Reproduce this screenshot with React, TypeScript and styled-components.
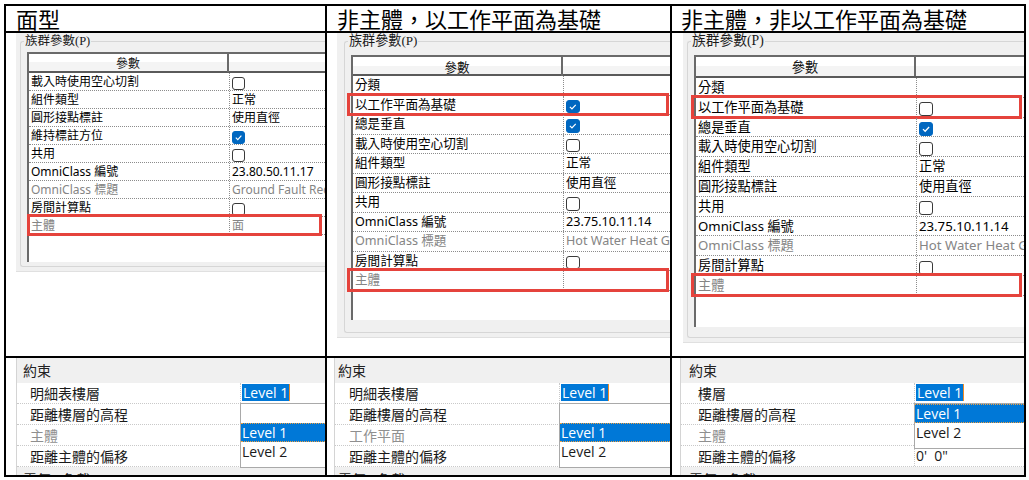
import styled, { createGlobalStyle } from "styled-components";

const GlobalStyle = createGlobalStyle`
  *, *::before, *::after { box-sizing: border-box; }
  html, body { margin: 0; padding: 0; background: #fff; }
  body {
    width: 1029px;
    height: 480px;
    overflow: hidden;
    font-family: "Noto Sans", "Noto Sans CJK TC", sans-serif;
    color: #000;
  }
`;

const Page = styled.div`
  padding: 4px 0 0 4px;
`;

const Sheet = styled.div`
  display: grid;
  grid-template-columns: 319px 343px 352px;
  grid-template-rows: 25px 323px 117px;
  gap: 2px;
  padding: 2px;
  background: #000;
  width: fit-content;
`;

const Cell = styled.div<{ $pl?: number }>`
  background: #fff;
  overflow: hidden;
  padding-left: ${(p) => p.$pl ?? 0}px;
`;

const Title = styled.div<{ $pl: number }>`
  display: flex;
  align-items: center;
  padding-left: ${(p) => p.$pl}px;
  background: #fff;
  font-family: "Noto Sans CJK TC", sans-serif;
  font-size: 22px;
  line-height: 25px;
  white-space: nowrap;
`;

/* ---------- 族群參數 dialog ---------- */

const Panel = styled.div<{ $inset: number; $height: number }>`
  height: ${(p) => p.$height}px;
  background: #f0f0f0;
  border-bottom: 1px solid #e0e0e0;
  padding: 1px 0 0 ${(p) => p.$inset - 7}px;
`;

const Group = styled.fieldset<{ $pt: number }>`
  margin: 0;
  min-width: 0;
  height: calc(100% - 4px);
  padding: ${(p) => p.$pt}px 0 0 6px;
  border: 1px solid #d6d6d6;
  border-right: none;
  border-radius: 3px 0 0 3px;
`;

const Legend = styled.legend<{ $s: number }>`
  margin-left: -3px;
  padding: 0 1px;
  font-family: "Liberation Serif", "Noto Sans CJK TC", serif;
  font-size: ${(p) => 12.5 * p.$s}px;
  line-height: 14px;
  color: #1a1a1a;
`;

const Table = styled.div<{ $s: number; $height: number }>`
  width: ${(p) => 422 * p.$s}px;
  height: ${(p) => p.$height}px;
  background: #fff;
  border-left: 2px solid #6a6a6a;
  font-size: ${(p) => 12 * p.$s}px;
`;

const HeadRow = styled.div<{ $s: number; $h: number }>`
  display: grid;
  grid-template-columns: ${(p) => 200 * p.$s}px ${(p) => 220 * p.$s}px;
  height: ${(p) => p.$h}px;
  border-top: 2px solid #6a6a6a;
  border-bottom: 2px solid #5a5a5a;
  background: linear-gradient(#ffffff 50%, #f4f4f4 50%);
`;

const HeadCell = styled.div`
  display: flex;
  align-items: center;
  justify-content: center;
  border-right: 2px solid #6a6a6a;
  color: #111;
`;

const Row = styled.div<{ $s: number; $h: number; $markLeft: number; $markWidth: number; $mark?: boolean; $muted?: boolean }>`
  position: relative;
  display: grid;
  grid-template-columns: ${(p) => 200 * p.$s}px ${(p) => 220 * p.$s}px;
  height: ${(p) => p.$h}px;
  border-bottom: 1px dotted #8c8c8c;
  color: ${(p) => (p.$muted ? "#858585" : "#000")};
  line-height: ${(p) => p.$h - 1}px;
  white-space: nowrap;

  &::after {
    content: "";
    display: ${(p) => (p.$mark ? "block" : "none")};
    position: absolute;
    top: -3px;
    bottom: -2px;
    left: ${(p) => p.$markLeft}px;
    width: ${(p) => p.$markWidth}px;
    border: 3px solid #e5433c;
  }
`;

const Label = styled.div`
  padding-left: 2px;
  overflow: hidden;
`;

const Value = styled.div`
  padding-left: 2px;
  border-left: 1px dotted #8c8c8c;
  overflow: hidden;
`;

const Box = styled.span<{ $s: number; $on?: boolean }>`
  display: inline-flex;
  align-items: center;
  justify-content: center;
  width: ${(p) => 13 * p.$s}px;
  height: ${(p) => 13 * p.$s}px;
  margin-top: ${(p) => 4 * p.$s}px;
  border-radius: 3px;
  border: 1px solid ${(p) => (p.$on ? "#0067c0" : "#3a3a3a")};
  background: ${(p) => (p.$on ? "#0067c0" : "#fff")};
  vertical-align: top;
`;

type ParamItem = {
  label: string;
  value?: string;
  check?: boolean;
  on?: boolean;
  muted?: boolean;
  mark?: boolean;
};

function Check({ s, on }: { s: number; on?: boolean }) {
  return (
    <Box $s={s} $on={on}>
      {on && (
        <svg width={9 * s} height={9 * s} viewBox="0 0 10 10">
          <polyline points="2,5.2 4.2,7.3 8.2,3" fill="none" stroke="#fff" strokeWidth="1.3" />
        </svg>
      )}
    </Box>
  );
}

type SheetProps = {
  s: number;
  rowH: number;
  headH: number;
  inset: number;
  height: number;
  tableTop: number;
  tableHeight: number;
  markLeft: number;
  markWidth: number;
  rows: ParamItem[];
};

function ParamDialog({ s, rowH, headH, inset, height, tableTop, tableHeight, markLeft, markWidth, rows }: SheetProps) {
  return (
    <Panel $inset={inset} $height={height}>
      <Group $pt={tableTop - 15}>
        <Legend $s={s}>族群參數(P)</Legend>
        <Table $s={s} $height={tableHeight}>
          <HeadRow $s={s} $h={headH}>
            <HeadCell>參數</HeadCell>
            <HeadCell>值</HeadCell>
          </HeadRow>
          {rows.map((r) => (
            <Row
              key={r.label}
              $s={s}
              $h={rowH}
              $mark={r.mark}
              $muted={r.muted}
              $markLeft={markLeft}
              $markWidth={markWidth}
            >
              <Label>{r.label}</Label>
              <Value>{r.check ? <Check s={s} on={r.on} /> : r.value}</Value>
            </Row>
          ))}
        </Table>
      </Group>
    </Panel>
  );
}

/* ---------- 性質 palette ---------- */

const Palette = styled.div<{ $ml: number }>`
  margin-left: ${(p) => p.$ml}px;
  height: 100%;
  background: #fff;
  border-left: 1px solid #d4d4d4;
  font-family: "Noto Sans CJK TC", sans-serif;
  font-size: 14px;
  white-space: nowrap;
`;

const Category = styled.div<{ $indent: number }>`
  height: 25px;
  line-height: 25px;
  padding-left: ${(p) => p.$indent}px;
  background: #f0f0f0;
  color: #222;
`;

const PropRow = styled.div<{ $labelW: number; $indent: number; $muted?: boolean }>`
  display: grid;
  grid-template-columns: ${(p) => p.$labelW}px 1fr;
  height: 21px;
  line-height: 20px;
  border-bottom: 1px dotted #c9c9c9;
  color: ${(p) => (p.$muted ? "#8f8f8f" : "#1a1a1a")};

  & > span {
    padding-left: ${(p) => p.$indent}px;
  }
`;

const PropValue = styled.div`
  position: relative;
  border-left: 1px dotted #c9c9c9;
  padding-left: 1px;
  font-family: "Open Sans", "Noto Sans", sans-serif;
  white-space: pre;
`;

const Selected = styled.span`
  display: inline-block;
  margin-top: 1px;
  height: 17px;
  line-height: 17px;
  padding: 0 1px;
  background: #0078d7;
  color: #fff;
  border-right: 1px solid #f08a24;
`;

const List = styled.div`
  position: absolute;
  z-index: 2;
  top: -1px;
  left: -1px;
  right: 0;
  padding-bottom: 6px;
  background: #fff;
  border: 1px solid #a9a9a9;
  border-right: none;
`;

const Item = styled.div<{ $on?: boolean }>`
  height: 19px;
  line-height: 18px;
  padding-left: 1px;
  background: ${(p) => (p.$on ? "#0078d7" : "transparent")};
  color: ${(p) => (p.$on ? "#fff" : "#1a1a1a")};
  border-top: 1px dotted ${(p) => (p.$on ? "#f0a040" : "transparent")};
  border-bottom: 1px dotted ${(p) => (p.$on ? "#f0a040" : "transparent")};
`;

type PaletteProps = {
  ml: number;
  catIndent: number;
  indent: number;
  labelW: number;
  levelLabel: string;
  hostLabel: string;
  items: string[];
  offset?: string;
};

function Properties({ ml, catIndent, indent, labelW, levelLabel, hostLabel, items, offset }: PaletteProps) {
  return (
    <Palette $ml={ml}>
      <Category $indent={catIndent}>約束</Category>
      <PropRow $labelW={labelW} $indent={indent}>
        <span>{levelLabel}</span>
        <PropValue>
          <Selected>Level 1</Selected>
        </PropValue>
      </PropRow>
      <PropRow $labelW={labelW} $indent={indent}>
        <span>距離樓層的高程</span>
        <PropValue>
          <List>
            {items.map((it, i) => (
              <Item key={i} $on={it === "Level 1"}>
                {it}
              </Item>
            ))}
          </List>
        </PropValue>
      </PropRow>
      <PropRow $labelW={labelW} $indent={indent} $muted>
        <span>{hostLabel}</span>
        <PropValue />
      </PropRow>
      <PropRow $labelW={labelW} $indent={indent}>
        <span>距離主體的偏移</span>
        <PropValue>{offset}</PropValue>
      </PropRow>
      <Category $indent={catIndent}>電氣 - 負載</Category>
    </Palette>
  );
}

/* ---------- data ---------- */

const faceRows: ParamItem[] = [
  { label: "載入時使用空心切割", check: true },
  { label: "組件類型", value: "正常" },
  { label: "圓形接點標註", value: "使用直徑" },
  { label: "維持標註方位", check: true, on: true },
  { label: "共用", check: true },
  { label: "OmniClass 編號", value: "23.80.50.11.17" },
  { label: "OmniClass 標題", value: "Ground Fault Receptacle", muted: true },
  { label: "房間計算點", check: true },
  { label: "主體", value: "面", muted: true, mark: true },
];

const planeRows = (onPlane: boolean): ParamItem[] => [
  { label: "分類", value: "" },
  { label: "以工作平面為基礎", check: true, on: onPlane, mark: true },
  { label: "總是垂直", check: true, on: true },
  { label: "載入時使用空心切割", check: true },
  { label: "組件類型", value: "正常" },
  { label: "圓形接點標註", value: "使用直徑" },
  { label: "共用", check: true },
  { label: "OmniClass 編號", value: "23.75.10.11.14" },
  { label: "OmniClass 標題", value: "Hot Water Heat Generator", muted: true },
  { label: "房間計算點", check: true },
  { label: "主體", value: "", muted: true, mark: true },
];

export default function App() {
  return (
    <Page>
      <GlobalStyle />
      <Sheet>
        <Title $pl={10}>面型</Title>
        <Title $pl={10}>非主體，以工作平面為基礎</Title>
        <Title $pl={9}>非主體，非以工作平面為基礎</Title>

        <Cell $pl={10}>
          <ParamDialog
            s={1}
            rowH={18}
            headH={21}
            inset={11}
            height={239}
            tableTop={19}
            tableHeight={210}
            markLeft={-2}
            markWidth={295}
            rows={faceRows}
          />
        </Cell>
        <Cell $pl={10}>
          <ParamDialog
            s={1.05}
            rowH={19.5}
            headH={21}
            inset={14}
            height={305}
            tableTop={22}
            tableHeight={265}
            markLeft={-6}
            markWidth={322}
            rows={planeRows(true)}
          />
        </Cell>
        <Cell $pl={11}>
          <ParamDialog
            s={1.1}
            rowH={19.8}
            headH={23}
            inset={11}
            height={310}
            tableTop={22}
            tableHeight={272}
            markLeft={-5}
            markWidth={331}
            rows={planeRows(false)}
          />
        </Cell>

        <Cell>
          <Properties
            ml={10}
            catIndent={6}
            indent={13}
            labelW={223}
            levelLabel="明細表樓層"
            hostLabel="主體"
            items={["", "Level 1", "Level 2"]}
          />
        </Cell>
        <Cell>
          <Properties
            ml={7}
            catIndent={3}
            indent={14}
            labelW={224}
            levelLabel="明細表樓層"
            hostLabel="工作平面"
            items={["", "Level 1", "Level 2"]}
          />
        </Cell>
        <Cell>
          <Properties
            ml={8}
            catIndent={8}
            indent={17}
            labelW={233}
            levelLabel="樓層"
            hostLabel="主體"
            items={["Level 1", "Level 2"]}
            offset={"0'  0\""}
          />
        </Cell>
      </Sheet>
    </Page>
  );
}
